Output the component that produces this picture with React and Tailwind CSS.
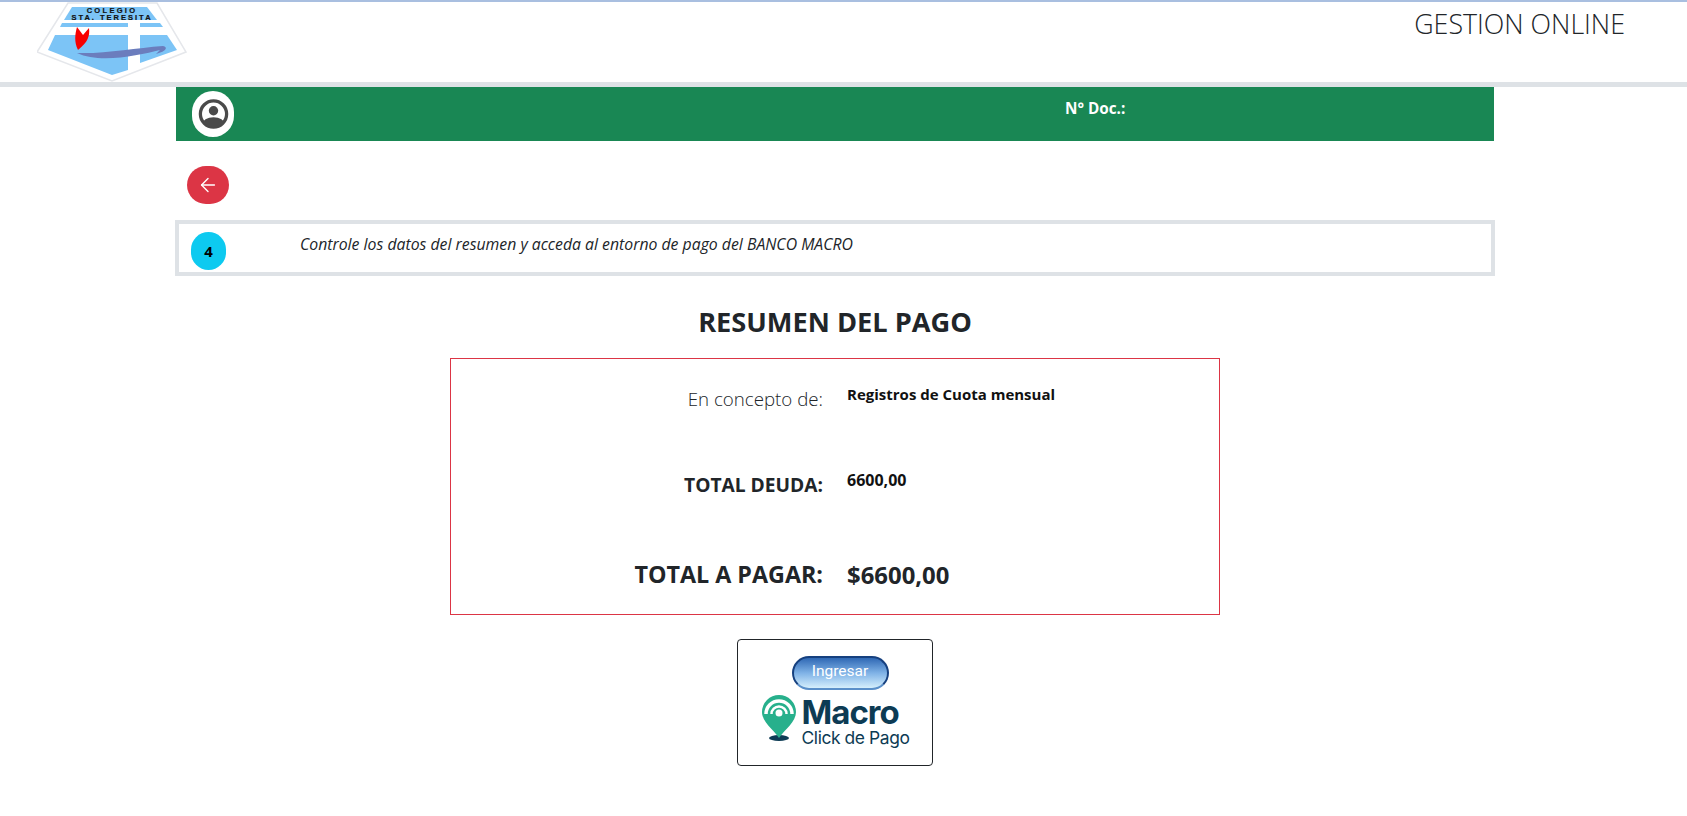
import React from "react";
import { ArrowLeft } from "lucide-react";

const font = "font-['Open_Sans','Noto_Sans',sans-serif]";

const Logo = () => (
  <svg viewBox="37 0 150 82" className="w-[150px] h-[82px] -mt-[2px]">
    <polygon points="68,3 157,3 186,52 112,81 37,52" fill="#fff" stroke="#e5e7eb" strokeWidth="1.5" />
    <polygon points="72,7 147,7 157,20 64,20" fill="#7cc4f6" />
    <polygon points="62,23 128,23 128,27 60,27" fill="#7cc4f6" />
    <polygon points="140,23 160,23 163,27 140,27" fill="#7cc4f6" />
    <polygon points="55,35 128,35 128,70 112,75 48,50" fill="#7cc4f6" />
    <polygon points="140,35 167,35 177,50 140,63" fill="#7cc4f6" />
    <path d="M77 27 L83 35 L89 28 C90 36 88 42 78 50 C74 42 75 34 77 27 Z" fill="#f80000" />
    <path d="M77 53 C105 54 135 48 163 46 C168 47 167 51 156 54 L160 50 C140 55 100 64 77 53 Z" fill="#6b7dbd" />
    <text x="112" y="13" textAnchor="middle" fontFamily="'Liberation Sans',sans-serif" fontWeight="700" fontSize="7.5" letterSpacing="2.3" stroke="#111" strokeWidth="0.2" fill="#111">COLEGIO</text>
    <text x="112" y="19.5" textAnchor="middle" fontFamily="'Liberation Sans',sans-serif" fontWeight="700" fontSize="7.5" letterSpacing="2" stroke="#111" strokeWidth="0.2" fill="#111">STA. TERESITA</text>
  </svg>
);

const Avatar = () => (
  <div className="w-[42px] h-[46px] rounded-full bg-white flex items-center justify-center">
    <svg viewBox="0 0 32 32" className="w-[31px] h-[30px]">
      <defs>
        <clipPath id="avatar-clip">
          <circle cx="16" cy="16" r="14" />
        </clipPath>
      </defs>
      <circle cx="16" cy="16" r="14" fill="#fff" stroke="#4a4a4a" strokeWidth="3.5" />
      <circle cx="16" cy="12.5" r="5" fill="#4a4a4a" />
      <ellipse cx="16" cy="27" rx="12" ry="7.5" fill="#4a4a4a" clipPath="url(#avatar-clip)" />
    </svg>
  </div>
);

const MacroLogo = () => (
  <div className="w-[196px] h-[127px] border border-[#212529] rounded-[4px] flex flex-col items-center pt-[16px] bg-white">
    <div className="w-[97px] h-[34px] rounded-full border-2 border-[#16407f] border-b-[#5a8fc9] bg-gradient-to-b from-[#2f68b4] via-[#7fb2e6] to-[#d5effc] flex items-start justify-center pt-[4px] text-[15.5px] leading-[18px] text-white font-['Roboto',sans-serif] ml-[10px]">
      Ingresar
    </div>
    <div className="flex items-start mt-[6px] ml-[-1px]">
      <svg viewBox="0 0 38 50" className="w-[38px] h-[50px] -mt-[3px]">
        <ellipse cx="19" cy="45" rx="10" ry="3" fill="#0d3b54" />
        <path d="M19 45 C13 36 2 29 2 19 A17 17 0 0 1 36 19 C36 29 25 36 19 45 Z" fill="#27b08c" />
        <path d="M6 21 A13 13 0 0 1 32 21" fill="none" stroke="#fff" strokeWidth="3.5" />
        <path d="M11.5 21 A7.5 7.5 0 0 1 26.5 21" fill="none" stroke="#fff" strokeWidth="2.5" />
        <circle cx="19" cy="20" r="3.5" fill="#fff" />
      </svg>
      <div className="flex flex-col ml-[4px] text-[#0d3b54]">
        <span className="font-['Inter',sans-serif] font-bold text-[33px] leading-[32px] tracking-[-1px]">Macro</span>
        <span className="font-['Inter',sans-serif] text-[17.4px] leading-[20px] tracking-[-0.4px]">Click de Pago</span>
      </div>
    </div>
  </div>
);

const App = () => {
  return (
    <div className={`${font} min-h-[816px] bg-white text-[#212529]`}>
      {/* ================= HEADER ================= */}
      <header className="h-[87px] border-t-2 border-t-[#a9bfe0] border-b-[5px] border-b-[#dee2e6] flex justify-between pl-[37px] pr-[62px]">
        <Logo />
        <div className="font-light text-[26.8px] leading-[34px] pt-[5px] text-[#212529]">GESTION ONLINE</div>
      </header>

      <main className="w-[1320px] ml-[175px]">
        {/* ================= USER BAR ================= */}
        <div className="h-[54px] ml-[1px] mr-[1px] bg-[#198754] flex items-center pl-[16px]">
          <Avatar />
          <div className="ml-[831px] mb-[12px] text-white font-bold text-[15.3px] leading-[20px]">N° Doc.:</div>
        </div>

        <button className="w-[42px] h-[38px] mt-[25px] ml-[12px] rounded-full bg-[#dc3545] text-white flex items-center justify-center">
          <ArrowLeft size={22} strokeWidth={1.5} />
        </button>

        {/* ================= STEP ================= */}
        <div className="h-[56px] mt-[16px] border-4 border-[#dee2e6] flex items-start pl-[12px]">
          <div className="w-[35px] h-[38px] mt-[8px] rounded-full bg-[#0dcaf0] text-black font-bold text-[15px] flex items-center justify-center">4</div>
          <p className="ml-[74px] mt-[10px] italic text-[15.8px] leading-[20px]">
            Controle los datos del resumen y acceda al entorno de pago del BANCO MACRO
          </p>
        </div>

        <h2 className="mt-[27px] text-center font-bold text-[27.2px] leading-[38px]">RESUMEN DEL PAGO</h2>

        {/* ================= RESUMEN ================= */}
        <div className="w-[770px] h-[257px] mt-[17px] ml-[275px] border border-[#dc3545] pt-[26px]">
          <div className="grid grid-cols-[372px_1fr] gap-x-[24px] items-start">
            <div className="text-right font-light text-[18.7px] leading-[27px]">En concepto de:</div>
            <div className="-mt-[1px] font-bold text-[15px] leading-[20px] text-[#111]">Registros de Cuota mensual</div>
          </div>
          <div className="grid grid-cols-[372px_1fr] gap-x-[24px] items-start mt-[59px]">
            <div className="text-right font-bold text-[19.2px] leading-[27px]">TOTAL DEUDA:</div>
            <div className="-mt-[1px] font-bold text-[16px] leading-[20px] text-[#111]">6600,00</div>
          </div>
          <div className="grid grid-cols-[372px_1fr] gap-x-[24px] items-start mt-[60px]">
            <div className="text-right font-bold text-[23.3px] leading-[33px]">TOTAL A PAGAR:</div>
            <div className="font-bold text-[23.9px] leading-[33px]">$6600,00</div>
          </div>
        </div>

        <div className="mt-[24px] ml-[562px]">
          <MacroLogo />
        </div>
      </main>
    </div>
  );
};

export default App;
